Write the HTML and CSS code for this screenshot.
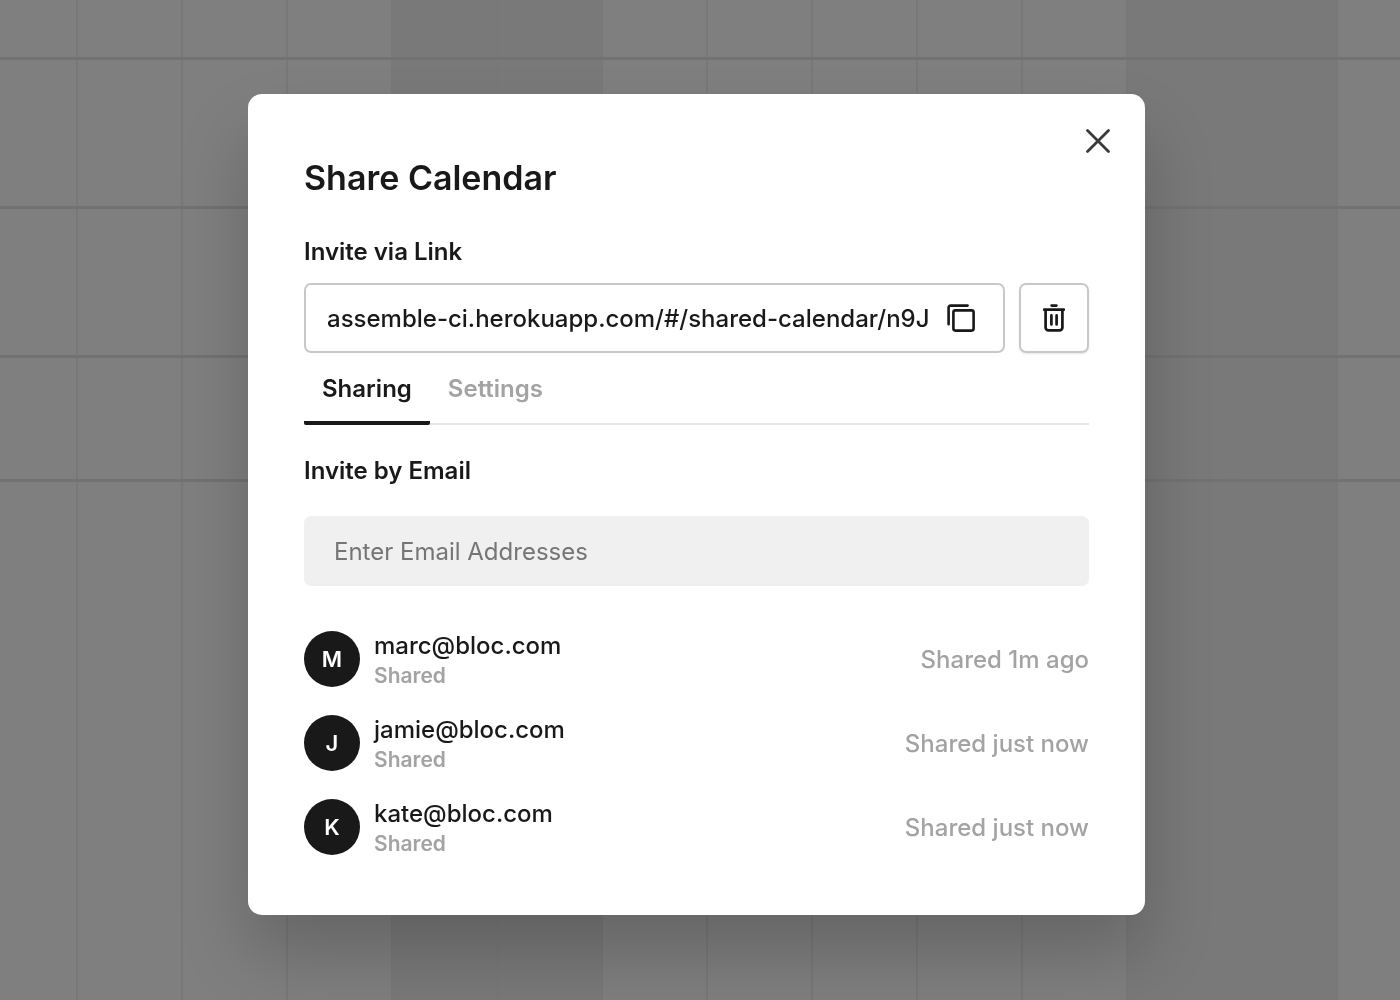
FILE: index.html
```html
<!DOCTYPE html>
<html lang="en">
<head>
    <meta charset="UTF-8">
    <meta name="viewport" content="width=device-width, initial-scale=1.0">
    <title>Share Calendar</title>
    <link rel="stylesheet" href="styles.css">
</head>
<body>
    <!-- Calendar grid behind the dialog -->
    <div class="calendar" aria-hidden="true">
        <div class="days">
            <div class="day first"></div>
            <div class="day"></div>
            <div class="day"></div>
            <div class="day"></div>
            <div class="day weekend"></div>
            <div class="day weekend"></div>
            <div class="day"></div>
            <div class="day"></div>
            <div class="day"></div>
            <div class="day"></div>
            <div class="day"></div>
            <div class="day weekend"></div>
            <div class="day weekend"></div>
            <div class="day"></div>
        </div>
        <div class="rows">
            <div class="row header"></div>
            <div class="row"></div>
            <div class="row"></div>
            <div class="row short"></div>
        </div>
    </div>

    <div class="overlay">
        <div class="modal" role="dialog" aria-labelledby="title">
            <button class="close" type="button" aria-label="Close">
                <svg width="26" height="26" viewBox="0 0 26 26" fill="none" stroke="currentColor" stroke-width="2.8" stroke-linecap="round">
                    <path d="M2.5 2.5l21 21M23.5 2.5l-21 21"/>
                </svg>
            </button>

            <h1 id="title">Share Calendar</h1>

            <label class="label" for="link">Invite via Link</label>
            <div class="link-row">
                <div class="link-box">
                    <input type="text" id="link" value="assemble-ci.herokuapp.com/#/shared-calendar/n9J" readonly>
                    <button class="copy" type="button" aria-label="Copy link">
                        <svg width="28" height="28" viewBox="0 0 28 28" fill="none" stroke="currentColor" stroke-width="2.6" stroke-linecap="round">
                            <path d="M1.6 20.2V3.6a2 2 0 0 1 2-2h17"/>
                            <rect x="6.4" y="6.4" width="20.2" height="20.2" rx="2"/>
                        </svg>
                    </button>
                </div>
                <button class="delete" type="button" aria-label="Delete link">
                    <svg width="24" height="28" viewBox="0 0 24 28" fill="none" stroke="currentColor" stroke-width="2.7" stroke-linecap="round">
                        <path d="M9.6 1.6h4.8M2.2 5.7h19.6"/>
                        <path d="M3.6 6v17.4a3 3 0 0 0 3 3h10.8a3 3 0 0 0 3-3V6"/>
                        <path d="M9.4 11.4v9M14.6 11.4v9"/>
                    </svg>
                </button>
            </div>

            <div class="tabs" role="tablist">
                <button class="tab active" type="button" role="tab" aria-selected="true">Sharing</button>
                <button class="tab" type="button" role="tab" aria-selected="false">Settings</button>
            </div>

            <label class="label" for="email">Invite by Email</label>
            <input class="email" type="email" id="email" placeholder="Enter Email Addresses">

            <ul class="people">
                <li class="person">
                    <div class="avatar">M</div>
                    <div class="info">
                        <div class="address">marc@bloc.com</div>
                        <div class="status">Shared</div>
                    </div>
                    <div class="time">Shared 1m ago</div>
                </li>
                <li class="person">
                    <div class="avatar">J</div>
                    <div class="info">
                        <div class="address">jamie@bloc.com</div>
                        <div class="status">Shared</div>
                    </div>
                    <div class="time">Shared just now</div>
                </li>
                <li class="person">
                    <div class="avatar">K</div>
                    <div class="info">
                        <div class="address">kate@bloc.com</div>
                        <div class="status">Shared</div>
                    </div>
                    <div class="time">Shared just now</div>
                </li>
            </ul>
        </div>
    </div>
</body>
</html>
```

FILE: styles.css
```css
* {
    box-sizing: border-box;
}

body {
    margin: 0;
    font-family: Inter, sans-serif;
    font-size: 24px;
    color: #191919;
    background-color: #7f7f7f;
}

button, input {
    font-family: inherit;
    font-size: inherit;
    color: inherit;
}

button {
    padding: 0;
    border: none;
    background: none;
    cursor: pointer;
}

svg {
    display: block;
}

/* Calendar backdrop */
.calendar {
    position: fixed;
    inset: 0;
    overflow: hidden;
}

.days {
    display: flex;
    height: 100%;
}

.day {
    flex: 0 0 105px;
    border-right: 2px solid #787878;
}

.day.first {
    flex-basis: 78px;
}

.weekend {
    background-color: #797979;
}

.rows {
    position: absolute;
    inset: 0;
}

.row {
    height: 149px;
    border-bottom: 3px solid #727272;
}

.row.header {
    height: 60px;
}

.row.short {
    height: 124px;
}

/* Dialog */
.overlay {
    position: relative;
    display: flex;
    justify-content: center;
    min-height: 100vh;
    padding: 94px 7px 85px 0;
    align-items: flex-start;
}

.modal {
    position: relative;
    width: 100%;
    max-width: 897px;
    padding: 60px 56px;
    background-color: #fff;
    border-radius: 14px;
    box-shadow: 0 40px 70px rgba(0, 0, 0, 0.2);
}

.close {
    position: absolute;
    top: 34px;
    right: 34px;
    color: #3a3a3a;
}

h1 {
    margin: 0 0 32px;
    font-size: 34px;
    line-height: 48px;
    font-weight: 600;
}

.label {
    display: block;
    line-height: 36px;
    font-weight: 600;
}

.link-row {
    display: flex;
    gap: 14px;
    margin-top: 13px;
}

.link-box {
    flex: 1;
    display: flex;
    align-items: center;
    gap: 14px;
    height: 70px;
    padding: 0 28px 0 21px;
    border: 2px solid #c8c8c8;
    border-radius: 7px;
}

.link-box input {
    flex: 1;
    min-width: 0;
    padding: 0;
    border: none;
    outline: none;
    font-weight: 500;
}

.delete {
    display: flex;
    justify-content: center;
    align-items: center;
    width: 70px;
    height: 70px;
    border: 2px solid #c8c8c8;
    border-radius: 7px;
    box-shadow: 0 1px 2px rgba(0, 0, 0, 0.1);
}

.tabs {
    display: flex;
    margin-bottom: 28px;
    border-bottom: 2px solid #e4e4e4;
}

.tab {
    height: 72px;
    margin-bottom: -2px;
    padding: 2px 18px 0;
    border-bottom: 4px solid transparent;
    border-radius: 2px;
    font-weight: 600;
    color: #a3a3a3;
}

.tab.active {
    color: #191919;
    border-bottom-color: #191919;
}

.email {
    display: block;
    width: 100%;
    height: 70px;
    margin-top: 27px;
    padding: 0 30px;
    border: none;
    border-radius: 7px;
    background-color: #f0f0f0;
}

.email::placeholder {
    color: #757575;
}

.people {
    display: flex;
    flex-direction: column;
    gap: 28px;
    margin: 45px 0 0;
    padding: 0;
    list-style: none;
}

.person {
    display: flex;
    align-items: center;
    gap: 14px;
    height: 56px;
}

.avatar {
    width: 56px;
    height: 56px;
    border-radius: 50%;
    background-color: #191919;
    color: #fff;
    font-size: 22px;
    line-height: 56px;
    font-weight: 600;
    text-align: center;
}

.info {
    flex: 1;
    padding-top: 2px;
}

.address {
    line-height: 32px;
    font-weight: 500;
}

.status {
    font-size: 21px;
    line-height: 28px;
    font-weight: 600;
    color: #a3a3a3;
}

.time {
    font-weight: 500;
    color: #a3a3a3;
}
```
